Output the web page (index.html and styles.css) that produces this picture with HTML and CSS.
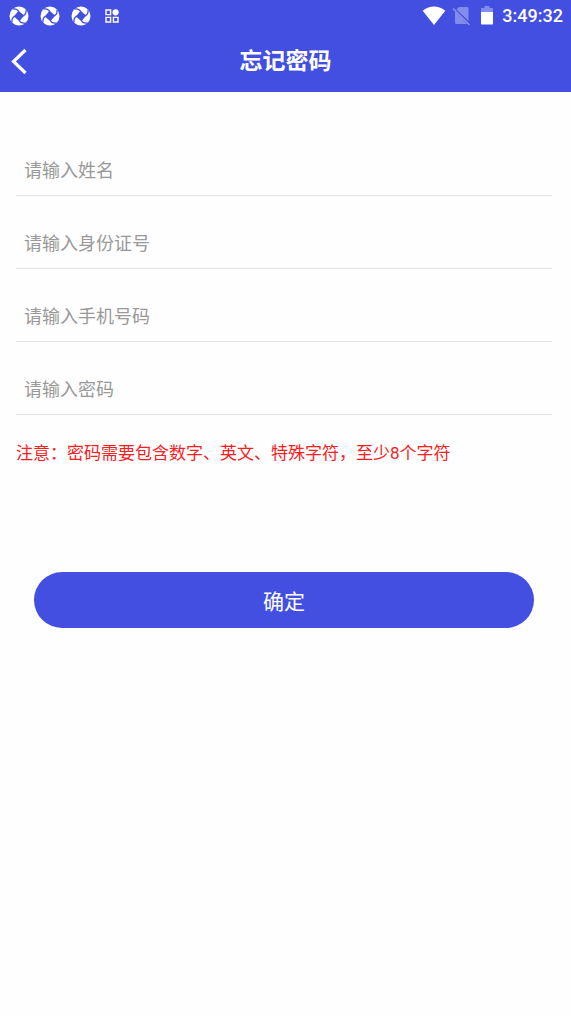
FILE: index.html
```html
<!DOCTYPE html>
<html lang="zh-CN">
<head>
<meta charset="utf-8">
<meta name="viewport" content="width=device-width, initial-scale=1">
<title>忘记密码</title>
<link rel="stylesheet" href="styles.css">
</head>
<body>
<svg class="symbols" aria-hidden="true">
  <symbol id="swirl" viewBox="0 0 20 20">
    <circle cx="10" cy="10" r="9.500" fill="#fff"/>
    <path d="M9.500 4.800 15.200 9.500 10.500 15.200 4.800 10.500Z" fill="#434fe1"/>
    <g fill="none" stroke="#434fe1" stroke-width="1.300">
      <path id="slit" d="M9.800 6C9 3.500 7 2.600 3.500 3"/>
      <use href="#slit" transform="rotate(90 10 10)"/>
      <use href="#slit" transform="rotate(180 10 10)"/>
      <use href="#slit" transform="rotate(270 10 10)"/>
    </g>
  </symbol>
</svg>
<header class="header">
  <div class="status">
    <div class="status-left">
      <svg class="swirl"><use href="#swirl"/></svg>
      <svg class="swirl"><use href="#swirl"/></svg>
      <svg class="swirl"><use href="#swirl"/></svg>
      <svg class="apps" viewBox="0 0 14 14" fill="none" stroke="#fff" stroke-width="1.400"><path d="M1 1h4.600v4.600H1zM1 8.400h4.600V13H1zM8.400 8.400H13V13H8.400z"/><circle cx="10.600" cy="3.300" r="3.100" fill="#fff" stroke="none"/></svg>
    </div>
    <div class="status-right">
      <svg class="wifi" viewBox="0 0 24 20"><path fill="#fff" d="M.7 4.700Q12-3.700 23.300 4.700L12 19Z"/></svg>
      <svg class="sim" viewBox="0 0 18 20"><path fill="#fff" opacity=".35" d="M7 1h8q1.500 0 1.500 1.500V15L4.500 3.500ZM3 5.500 15 18H4.500Q3 18 3 16.500Z"/><path stroke="#fff" stroke-width="1.500" opacity=".4" d="M1 2.500 17.500 19"/></svg>
      <svg class="battery" viewBox="0 0 14 20"><path fill="#fff" opacity=".35" d="M4.500 0h5v2H13v4H1V2h3.500z"/><path fill="#fff" d="M1 6h12v11.700q0 .8-.8.8H1.800q-.8 0-.8-.8z"/></svg>
      <time class="clock">3:49:32</time>
    </div>
  </div>
  <div class="nav">
    <button class="back" type="button" aria-label="返回"><svg viewBox="0 0 18 28"><path d="M15.500 2 3.500 13.500 15.500 25" fill="none" stroke="#fff" stroke-width="3.200"/></svg></button>
    <h1 class="title">忘记密码</h1>
  </div>
</header>
<main>
  <form class="form">
    <input class="field" type="text" placeholder="请输入姓名" aria-label="姓名">
    <input class="field" type="text" placeholder="请输入身份证号" aria-label="身份证号">
    <input class="field" type="tel" placeholder="请输入手机号码" aria-label="手机号码">
    <input class="field" type="password" placeholder="请输入密码" aria-label="密码">
    <p class="note">注意：密码需要包含数字、英文、特殊字符，至少8个字符</p>
    <button class="submit" type="button">确定</button>
  </form>
</main>
</body>
</html>
```
FILE: styles.css
```css
* { box-sizing: border-box; }
body {
  margin: 0;
  background: #fefefe;
  font-family: Roboto, "Noto Sans CJK SC", sans-serif;
}
.symbols { position: absolute; width: 0; height: 0; }
.header { background: #434fe1; color: #fff; }
.status {
  display: flex;
  justify-content: space-between;
  height: 32px;
  padding: 0 8px 0 9px;
}
.status-left, .status-right { display: flex; align-items: center; }
.status-left { gap: 11px; }
.swirl { width: 20px; height: 20px; }
.apps { width: 14px; height: 14px; margin-left: 3px; }
.wifi { width: 24px; height: 20px; }
.sim { width: 18px; height: 20px; margin-left: 6px; }
.battery { width: 14px; height: 20px; margin-left: 10px; }
.clock { margin-left: 8px; font-size: 18px; font-weight: 500; line-height: 32px; }
.nav {
  display: grid;
  grid-template-columns: 48px 1fr 48px;
  align-items: center;
  height: 60px;
}
.back {
  display: flex;
  padding: 0 0 0 10px;
  border: 0;
  background: none;
}
.back svg { width: 18px; height: 28px; }
.title { margin: 0; text-align: center; font-size: 23px; font-weight: 700; line-height: 34px; }
.form {
  display: flex;
  flex-direction: column;
  gap: 21px;
  padding: 52px 19px 0 16px;
}
.field {
  width: 100%;
  height: 52px;
  padding: 1px 8px 0;
  border: 0;
  border-bottom: 1px solid #e3e3e3;
  border-radius: 0;
  outline: 0;
  background: none;
  color: #333;
  font: inherit;
  font-size: 18px;
}
.field::placeholder { color: #999; opacity: 1; }
.note { margin: 4px 0 0; color: #f8201f; font-size: 17px; line-height: 26px; }
.submit {
  height: 56px;
  margin: 85px 18px 0;
  border: 0;
  border-radius: 28px;
  background: #434fe1;
  color: #fff;
  font: inherit;
  font-size: 21px;
}
```
